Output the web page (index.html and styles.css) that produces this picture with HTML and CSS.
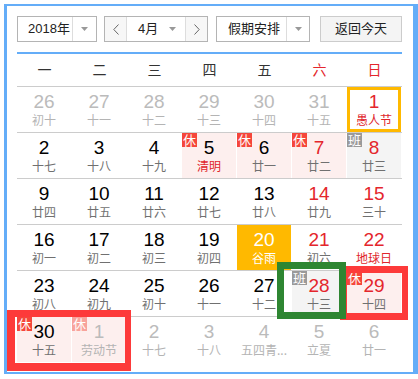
FILE: index.html
```html
<!DOCTYPE html>
<html lang="zh-CN">
<head>
<meta charset="utf-8">
<title>万年历</title>
<link rel="stylesheet" href="styles.css">
</head>
<body>
<div class="frame">
  <div class="toolbar">
    <div class="select year">
      <span class="sel-text">2018年</span>
      <span class="sel-arrow"><svg width="7" height="4" viewBox="0 0 7 4"><path d="M0 0h7L3.5 4z" fill="#999"/></svg></span>
    </div>
    <div class="month-group">
      <span class="nav"><svg width="6" height="11" viewBox="0 0 6 11"><path d="M5.5 0.5L0.8 5.5l4.7 5" fill="none" stroke="#666" stroke-width="1"/></svg></span>
      <div class="month">
        <span class="sel-text">4月</span>
        <svg class="month-arrow" width="7" height="4" viewBox="0 0 7 4"><path d="M0 0h7L3.5 4z" fill="#999"/></svg>
      </div>
      <span class="nav"><svg width="6" height="11" viewBox="0 0 6 11"><path d="M0.5 0.5l4.7 5-4.7 5" fill="none" stroke="#666" stroke-width="1"/></svg></span>
    </div>
    <div class="select holiday">
      <span class="sel-text">假期安排</span>
      <span class="sel-arrow"><svg width="7" height="4" viewBox="0 0 7 4"><path d="M0 0h7L3.5 4z" fill="#999"/></svg></span>
    </div>
    <div class="today-btn">返回今天</div>
  </div>

  <div class="weekdays">
    <span>一</span><span>二</span><span>三</span><span>四</span><span>五</span><span class="red">六</span><span class="red">日</span>
  </div>

  <div class="grid">
    <div class="row">
      <div class="day other"><span class="num">26</span><span class="lunar">初十</span></div>
      <div class="day other"><span class="num">27</span><span class="lunar">十一</span></div>
      <div class="day other"><span class="num">28</span><span class="lunar">十二</span></div>
      <div class="day other"><span class="num">29</span><span class="lunar">十三</span></div>
      <div class="day other"><span class="num">30</span><span class="lunar">十四</span></div>
      <div class="day other"><span class="num">31</span><span class="lunar">十五</span></div>
      <div class="day wkend sel"><span class="num">1</span><span class="lunar fest">愚人节</span></div>
    </div>
    <div class="row">
      <div class="day"><span class="num">2</span><span class="lunar">十七</span></div>
      <div class="day"><span class="num">3</span><span class="lunar">十八</span></div>
      <div class="day"><span class="num">4</span><span class="lunar">十九</span></div>
      <div class="day rest"><span class="badge">休</span><span class="num">5</span><span class="lunar fest">清明</span></div>
      <div class="day rest"><span class="badge">休</span><span class="num">6</span><span class="lunar">廿一</span></div>
      <div class="day rest wkend"><span class="badge">休</span><span class="num">7</span><span class="lunar">廿二</span></div>
      <div class="day work wkend"><span class="badge badge-work">班</span><span class="num">8</span><span class="lunar">廿三</span></div>
    </div>
    <div class="row">
      <div class="day"><span class="num">9</span><span class="lunar">廿四</span></div>
      <div class="day"><span class="num">10</span><span class="lunar">廿五</span></div>
      <div class="day"><span class="num">11</span><span class="lunar">廿六</span></div>
      <div class="day"><span class="num">12</span><span class="lunar">廿七</span></div>
      <div class="day"><span class="num">13</span><span class="lunar">廿八</span></div>
      <div class="day wkend"><span class="num">14</span><span class="lunar">廿九</span></div>
      <div class="day wkend"><span class="num">15</span><span class="lunar">三十</span></div>
    </div>
    <div class="row">
      <div class="day"><span class="num">16</span><span class="lunar">初一</span></div>
      <div class="day"><span class="num">17</span><span class="lunar">初二</span></div>
      <div class="day"><span class="num">18</span><span class="lunar">初三</span></div>
      <div class="day"><span class="num">19</span><span class="lunar">初四</span></div>
      <div class="day today"><span class="num">20</span><span class="lunar">谷雨</span></div>
      <div class="day wkend"><span class="num">21</span><span class="lunar">初六</span></div>
      <div class="day wkend"><span class="num">22</span><span class="lunar fest">地球日</span></div>
    </div>
    <div class="row">
      <div class="day"><span class="num">23</span><span class="lunar">初八</span></div>
      <div class="day"><span class="num">24</span><span class="lunar">初九</span></div>
      <div class="day"><span class="num">25</span><span class="lunar">初十</span></div>
      <div class="day"><span class="num">26</span><span class="lunar">十一</span></div>
      <div class="day"><span class="num">27</span><span class="lunar">十二</span></div>
      <div class="day work wkend"><span class="badge badge-work">班</span><span class="num">28</span><span class="lunar">十三</span></div>
      <div class="day rest wkend"><span class="badge">休</span><span class="num">29</span><span class="lunar">十四</span></div>
    </div>
    <div class="row last">
      <div class="day rest"><span class="badge">休</span><span class="num">30</span><span class="lunar">十五</span></div>
      <div class="day rest other"><span class="badge badge-faded">休</span><span class="num">1</span><span class="lunar">劳动节</span></div>
      <div class="day other"><span class="num">2</span><span class="lunar">十七</span></div>
      <div class="day other"><span class="num">3</span><span class="lunar">十八</span></div>
      <div class="day other"><span class="num">4</span><span class="lunar">五四青...</span></div>
      <div class="day other"><span class="num">5</span><span class="lunar">立夏</span></div>
      <div class="day other"><span class="num">6</span><span class="lunar">廿一</span></div>
    </div>
  </div>
</div>

<div class="mark mark-red-a"></div>
<div class="mark mark-red-b"></div>
<div class="mark mark-green"></div>
</body>
</html>
```

FILE: styles.css
```css
* { box-sizing: border-box; }

body {
  margin: 0;
  position: relative;
  background: #fff;
  font-family: "Liberation Sans", "Noto Sans CJK SC", Arial, sans-serif;
  color: #333;
}

.frame {
  margin: 4px 0 0 4px;
  width: 414px;
  height: 370px;
  border-style: solid;
  border-color: #64adf8;
  border-width: 2px 5px 2px 3px;
  padding: 10px 11px 0 10px;
}

/* toolbar */
.toolbar {
  display: flex;
  align-items: flex-start;
  padding-bottom: 10px;
  border-bottom: 2px solid #64adf8;
  font-size: 13px;
  color: #222;
}

.select {
  display: flex;
  height: 26px;
  border: 1px solid #b4b4b4;
  background: #fff;
}

.sel-text {
  line-height: 24px;
  white-space: nowrap;
}

.sel-arrow {
  display: flex;
  align-items: center;
  justify-content: center;
  border-left: 1px solid #ddd;
}

.year { width: 80px; }
.year .sel-text { width: 54px; padding-left: 10px; }
.year .sel-arrow { width: 24px; }

.month-group {
  display: flex;
  height: 26px;
  width: 104px;
  margin-left: 7px;
  border: 1px solid #b4b4b4;
}

.nav {
  width: 21px;
  display: flex;
  align-items: center;
  justify-content: center;
  background: #f7f7f7;
}

.month {
  display: flex;
  align-items: center;
  width: 60px;
  padding: 0 9px 0 11px;
  border-left: 1px solid #ddd;
  border-right: 1px solid #ddd;
  background: #fff;
}

.month-arrow { margin-left: auto; }

.holiday { width: 94px; margin-left: 8px; }
.holiday .sel-text { width: 69px; padding-left: 11px; }
.holiday .sel-arrow { width: 23px; }

.today-btn {
  width: 82px;
  height: 26px;
  margin-left: 10px;
  border: 1px solid #ccc;
  background: #f4f4f4;
  text-align: center;
  line-height: 24px;
}

/* weekdays */
.weekdays {
  display: grid;
  grid-template-columns: repeat(7, 55px);
  height: 33px;
  border-bottom: 1px solid #ccc;
  font-size: 14px;
  line-height: 32px;
  text-align: center;
  color: #333;
}

.weekdays .red { color: #e4262c; }

/* grid */
.row {
  display: grid;
  grid-template-columns: repeat(7, 55px);
  height: 46px;
  border-bottom: 1px solid #ccc;
}

.row.last { border-bottom: none; height: 45px; }

.day {
  position: relative;
  height: 45px;
  border-right: 1px solid #fff;
  display: flex;
  flex-direction: column;
  align-items: center;
  padding-top: 5px;
}

.num {
  font-family: "Liberation Sans", Arial, sans-serif;
  font-size: 19px;
  line-height: 20px;
  color: #000;
}

.lunar {
  font-family: "Noto Sans CJK SC", "Liberation Sans", sans-serif;
  font-size: 12px;
  line-height: 16px;
  color: #707070;
  white-space: nowrap;
}

.wkend .num { color: #e4262c; }
.lunar.fest { color: #e0262c; }

.other .num { color: #bbb; }
.other .lunar { color: #b4b4b4; }

.rest { background: #fdefee; }
.work { background: #f4f4f4; }

.today { background: #ffb900; }
.today .num, .today .lunar { color: #fff; }

.sel { box-shadow: inset 0 0 0 3px #ffb900; }

.badge {
  position: absolute;
  left: 0;
  top: 0;
  width: 15px;
  height: 14px;
  background: #f5463b;
  color: #fff;
  font-family: "Noto Sans CJK SC", sans-serif;
  font-size: 13px;
  line-height: 14px;
  text-align: center;
}

.badge-work { background: #9a9a9a; }
.badge-faded { background: #f8a39c; }

/* annotation marks drawn over the screenshot */
.mark {
  position: absolute;
  border-style: solid;
}

.mark-red-a {
  left: 7px;
  top: 310px;
  width: 124px;
  height: 61px;
  border-color: #fd3a3a;
  border-width: 7px 6px 8px 8px;
}

.mark-red-b {
  left: 340px;
  top: 266px;
  width: 68px;
  height: 54px;
  border-color: #fd3a3a;
  border-width: 7px 6px 7px 7px;
}

.mark-green {
  left: 277px;
  top: 262px;
  width: 69px;
  height: 57px;
  border-color: #2e8632;
  border-width: 7px;
}
```
